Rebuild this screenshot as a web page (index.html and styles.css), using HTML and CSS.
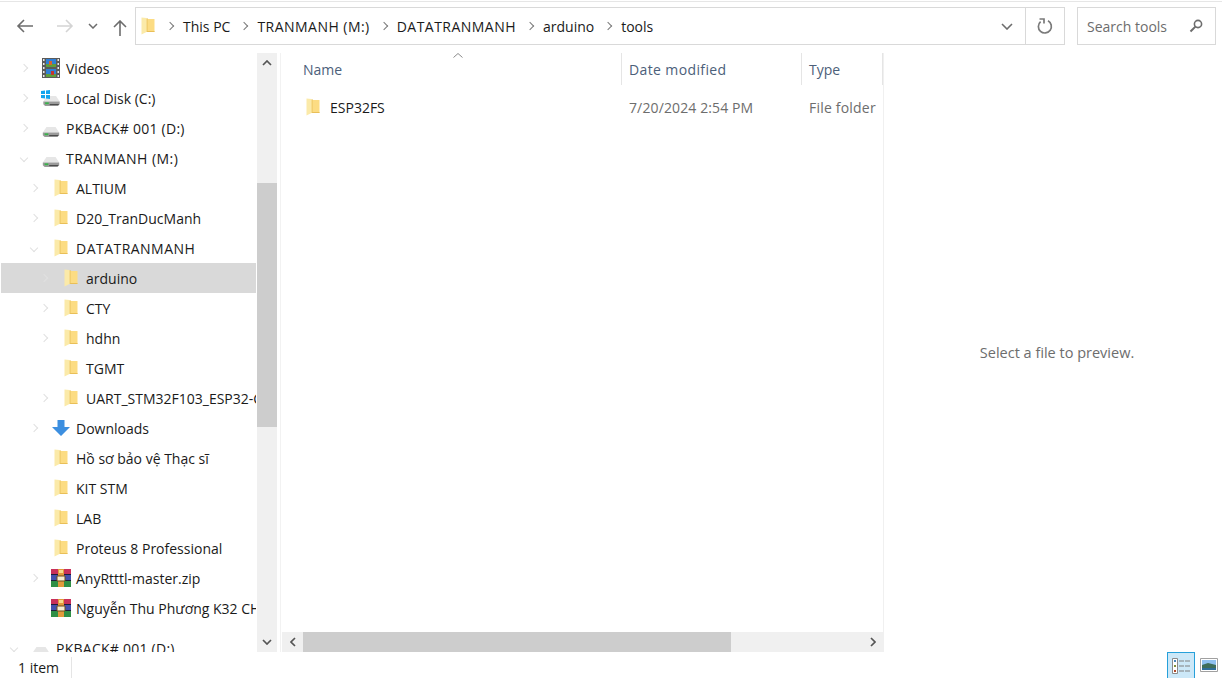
FILE: index.html
```html
<!DOCTYPE html>
<html lang="en">
<head>
    <meta charset="UTF-8">
    <title>tools</title>
    <link rel="stylesheet" href="styles.css">
</head>
<body>
    <svg class="defs" width="0" height="0">
        <symbol id="folder" viewBox="0 0 14 18">
            <path d="M5 2h8.500v13H5z" fill="#fcdc83"/>
            <path d="M6 14h7.500v1H6z" fill="#e9bf58"/>
            <path d="M5.500 1h1v14h-1z" fill="#e8c15e"/>
            <path d="M.5.500l5 .5v14l-5 2.500z" fill="#fbeaa9"/>
        </symbol>
        <symbol id="drive" viewBox="0 0 20 11">
            <path d="M5 0h10l4 6H1z" fill="#e6e6e6"/>
            <path d="M1 6h18v3l-2 2H3L1 9z" fill="#9a9a9a"/>
            <path d="M3 7h4v2H3z" fill="#38b54a"/>
            <path d="M8 9h10v1H8z" fill="#3c3c3c"/>
        </symbol>
        <symbol id="rar" viewBox="0 0 20 18">
            <path d="M0 0h20v6H0z" fill="#c9305a"/>
            <path d="M0 6h20v6H0z" fill="#4350ad"/>
            <path d="M0 12h20v6H0z" fill="#2f8f45"/>
            <path d="M0 5h20v1H0zM0 11h20v1H0z" fill="#1d1d3a"/>
            <path d="M7 0h6v18H7z" fill="#e29a3c"/>
            <path d="M6 7h8v5H6z" fill="#f6ecd0" stroke="#6d4a1d"/>
            <path d="M8 1h4v3H8z" fill="#f8d98c"/>
        </symbol>
    </svg>

    <header class="toolbar">
        <div class="nav-buttons">
            <svg class="back" width="18" height="16" viewBox="0 0 18 16"><path d="M8 2L2 8l6 6M2 8h15" fill="none" stroke="#6d6d6d" stroke-width="1.6"/></svg>
            <svg class="forward" width="18" height="16" viewBox="0 0 18 16"><path d="M10 2l6 6-6 6M16 8H1" fill="none" stroke="#d4d4d4" stroke-width="1.6"/></svg>
            <svg class="recent" width="10" height="6" viewBox="0 0 10 6"><path d="M1 1l4 4 4-4" fill="none" stroke="#6d6d6d" stroke-width="1.5"/></svg>
            <svg class="up" width="14" height="16" viewBox="0 0 14 16"><path d="M1 7l6-6 6 6M7 1v15" fill="none" stroke="#6d6d6d" stroke-width="1.6"/></svg>
        </div>
        <div class="address">
            <svg class="address-folder" width="14" height="18"><use href="#folder"/></svg>
            <span class="crumb-sep"></span><span class="crumb">This PC</span>
            <span class="crumb-sep"></span><span class="crumb caps">TRANMANH (M:)</span>
            <span class="crumb-sep"></span><span class="crumb caps">DATATRANMANH</span>
            <span class="crumb-sep"></span><span class="crumb">arduino</span>
            <span class="crumb-sep"></span><span class="crumb">tools</span>
            <span class="address-fill"></span>
            <svg class="address-drop" width="12" height="7" viewBox="0 0 12 7"><path d="M1 1l5 5 5-5" fill="none" stroke="#6d6d6d" stroke-width="1.6"/></svg>
            <div class="refresh">
                <svg width="16" height="17" viewBox="0 0 16 17"><path d="M11 2.800A6.500 6.500 0 1 1 3.600 3.600" fill="none" stroke="#7a7a7a" stroke-width="1.700"/><path d="M2.500 1h4.500v4.500" fill="none" stroke="#7a7a7a" stroke-width="1.700"/></svg>
            </div>
        </div>
        <div class="search">
            <span>Search tools</span>
            <svg width="14" height="14" viewBox="0 0 14 14"><circle cx="9" cy="5" r="3.600" fill="none" stroke="#6d6d6d" stroke-width="1.600"/><path d="M6.400 7.600L1.500 12.500" stroke="#6d6d6d" stroke-width="2"/></svg>
        </div>
    </header>

    <main class="main">
        <nav class="tree">
            <div class="row lvl-1"><i class="twist"></i><svg class="ic" height="20" viewBox="0 0 18 20"><path d="M0 0h18v20H0z" fill="#5a5a5a"/><path d="M1 1h1.500v2H1zM1 5h1.500v2H1zM1 9h1.500v2H1zM1 13h1.500v2H1zM1 17h1.500v2H1zM15.500 1H17v2h-1.500zM15.500 5H17v2h-1.500zM15.500 9H17v2h-1.500zM15.500 13H17v2h-1.500zM15.500 17H17v2h-1.500z" fill="#e8e8e8"/><path d="M4 1h10v8H4zM4 11h10v8H4z" fill="#2f7fd6"/><path d="M4 6h10v3H4zM4 16h10v3H4z" fill="#5e9e3c"/><path d="M7 3h3v4H7z" fill="#d9622b"/><path d="M9 13h3v4H9z" fill="#c4342c"/></svg><span>Videos</span></div>
            <div class="row lvl-1"><i class="twist"></i><svg class="ic" height="16" viewBox="0 0 20 16"><use href="#drive" x="1" y="6" width="19" height="10"/><path d="M0 1l4-.5V4H0zM5 .4L9 0v4H5zM0 5h4v3.500L0 8zM5 5h4v4l-4-.5z" fill="#12a5ee"/></svg><span>Local Disk (C:)</span></div>
            <div class="row lvl-1"><i class="twist"></i><svg class="ic drive-ic" height="10"><use href="#drive"/></svg><span class="caps-sm">PKBACK# 001 (D:)</span></div>
            <div class="row lvl-1"><i class="twist open"></i><svg class="ic drive-ic" height="10"><use href="#drive"/></svg><span class="caps">TRANMANH (M:)</span></div>
            <div class="row lvl-2"><i class="twist"></i><svg class="ic" height="18"><use href="#folder"/></svg><span>ALTIUM</span></div>
            <div class="row lvl-2"><i class="twist"></i><svg class="ic" height="18"><use href="#folder"/></svg><span>D20_TranDucManh</span></div>
            <div class="row lvl-2"><i class="twist open"></i><svg class="ic" height="18"><use href="#folder"/></svg><span class="caps">DATATRANMANH</span></div>
            <div class="row lvl-3 selected"><i class="twist"></i><svg class="ic" height="18"><use href="#folder"/></svg><span>arduino</span></div>
            <div class="row lvl-3"><i class="twist"></i><svg class="ic" height="18"><use href="#folder"/></svg><span>CTY</span></div>
            <div class="row lvl-3"><i class="twist"></i><svg class="ic" height="18"><use href="#folder"/></svg><span>hdhn</span></div>
            <div class="row lvl-3"><i class="twist none"></i><svg class="ic" height="18"><use href="#folder"/></svg><span>TGMT</span></div>
            <div class="row lvl-3"><i class="twist"></i><svg class="ic" height="18"><use href="#folder"/></svg><span>UART_STM32F103_ESP32-CAM</span></div>
            <div class="row lvl-2"><i class="twist"></i><svg class="ic" height="16" viewBox="0 0 18 16"><path d="M5.500 0h7v7H18l-9 9-9-9h5.500z" fill="#3d8fe0"/></svg><span>Downloads</span></div>
            <div class="row lvl-2"><i class="twist none"></i><svg class="ic" height="18"><use href="#folder"/></svg><span>Hồ sơ bảo vệ Thạc sĩ</span></div>
            <div class="row lvl-2"><i class="twist none"></i><svg class="ic" height="18"><use href="#folder"/></svg><span>KIT STM</span></div>
            <div class="row lvl-2"><i class="twist none"></i><svg class="ic" height="18"><use href="#folder"/></svg><span>LAB</span></div>
            <div class="row lvl-2"><i class="twist none"></i><svg class="ic" height="18"><use href="#folder"/></svg><span>Proteus 8 Professional</span></div>
            <div class="row lvl-2"><i class="twist"></i><svg class="ic" height="18"><use href="#rar"/></svg><span>AnyRtttl-master.zip</span></div>
            <div class="row lvl-2"><i class="twist none"></i><svg class="ic" height="18"><use href="#rar"/></svg><span>Nguyễn Thu Phương K32 CH Toán</span></div>
            <div class="row lvl-1 last"><i class="twist open"></i><svg class="ic drive-ic" height="10"><use href="#drive"/></svg><span class="caps-sm">PKBACK# 001 (D:)</span></div>
        </nav>

        <div class="vscroll">
            <div class="sb-btn"><svg width="10" height="6" viewBox="0 0 10 6"><path d="M1 5l4-4 4 4" fill="none" stroke="#555" stroke-width="1.700"/></svg></div>
            <div class="vscroll-top"></div>
            <div class="vscroll-thumb"></div>
            <div class="vscroll-rest"></div>
            <div class="sb-btn"><svg width="10" height="6" viewBox="0 0 10 6"><path d="M1 1l4 4 4-4" fill="none" stroke="#555" stroke-width="1.700"/></svg></div>
        </div>

        <section class="files">
            <div class="head">
                <div class="col col-name">Name<svg class="sort" width="10" height="5" viewBox="0 0 10 5"><path d="M.5 4.500L5 .5l4.500 4" fill="none" stroke="#8a8a8a"/></svg></div>
                <div class="col col-date">Date modified</div>
                <div class="col col-type">Type</div>
            </div>
            <div class="file-list">
                <div class="file-row">
                    <div class="cell cell-name"><svg width="14" height="18"><use href="#folder"/></svg><span>ESP32FS</span></div>
                    <div class="cell cell-date">7/20/2024 2:54 PM</div>
                    <div class="cell cell-type">File folder</div>
                </div>
            </div>
            <div class="hscroll">
                <div class="hs-btn"><svg width="6" height="10" viewBox="0 0 6 10"><path d="M5 1L1 5l4 4" fill="none" stroke="#555" stroke-width="1.700"/></svg></div>
                <div class="hscroll-thumb"></div>
                <div class="hscroll-rest"></div>
                <div class="hs-btn"><svg width="6" height="10" viewBox="0 0 6 10"><path d="M1 1l4 4-4 4" fill="none" stroke="#555" stroke-width="1.700"/></svg></div>
            </div>
        </section>

        <aside class="preview">Select a file to preview.</aside>
    </main>

    <footer class="status">
        <span class="count">1 item</span>
        <div class="views">
            <div class="view active">
                <svg width="18" height="16" viewBox="0 0 18 16"><path d="M.5.500h5v15h-5z" fill="#fff" stroke="#8a8a8a"/><path d="M2 2h2v2H2z" fill="#4a86b8"/><path d="M2 7h2v2H2z" fill="#7f8f3a"/><path d="M2 12h2v2H2z" fill="#b04a2a"/><path d="M7 3h5M13 3h5M7 8h5M13 8h5M7 13h5M13 13h5" stroke="#808080"/></svg>
            </div>
            <div class="view thumb">
                <svg width="18" height="14" viewBox="0 0 18 14"><path d="M.5.500h17v13H.5z" fill="#fff" stroke="#a0a0a0"/><path d="M2 2h14v5H2z" fill="#8fc0f0"/><path d="M2 7l6-2 8 2v3H2z" fill="#3f6d5a"/><path d="M2 10h14v2H2z" fill="#2f6d9a"/></svg>
            </div>
        </div>
    </footer>
</body>
</html>
```

FILE: styles.css
```css
html, body {
    margin: 0;
    padding: 0;
    height: 100%;
    overflow: hidden;
}
body {
    display: flex;
    flex-direction: column;
    font-family: 'Open Sans', 'Noto Sans', sans-serif;
    font-size: 14px;
    color: #1a1a1a;
    background-color: white;
}
.defs {
    position: absolute;
}
.caps {
    letter-spacing: .47px;
}
.caps-sm {
    letter-spacing: .25px;
}
.toolbar {
    display: flex;
    align-items: center;
    height: 38px;
    margin-top: 1px;
    padding: 5px 6px 0 0;
    border-top: 1px solid #e6e6e6;
    flex-shrink: 0;
}
.nav-buttons {
    display: flex;
    align-items: center;
    width: 135px;
    padding-left: 16px;
    box-sizing: border-box;
}
.forward {
    margin-left: 22px;
}
.recent {
    margin-left: 14px;
}
.up {
    margin: 3px 0 0 15px;
}
.address {
    display: flex;
    align-items: center;
    flex: 1;
    height: 38px;
    box-sizing: border-box;
    border: 1px solid #d9d9d9;
    padding-left: 5px;
}
.address-folder {
    margin-right: 12px;
}
.crumb {
    margin: 0 11px 0 9px;
    white-space: nowrap;
}
.crumb-sep {
    width: 5px;
    height: 5px;
    border-top: 1.5px solid #7a7a7a;
    border-right: 1.5px solid #7a7a7a;
    transform: rotate(45deg);
    margin-right: 1px;
}
.address-fill {
    flex: 1;
}
.address-drop {
    margin-right: 12px;
}
.refresh {
    display: flex;
    align-items: center;
    justify-content: center;
    width: 38px;
    height: 100%;
    border-left: 1px solid #d9d9d9;
}
.search {
    display: flex;
    align-items: center;
    justify-content: space-between;
    width: 139px;
    height: 38px;
    box-sizing: border-box;
    margin-left: 12px;
    padding: 0 12px 0 9px;
    border: 1px solid #d9d9d9;
    color: #6d6d6d;
}
.main {
    display: flex;
    flex: 1;
    min-height: 0;
    padding-top: 8px;
}
.tree {
    width: 257px;
    flex-shrink: 0;
    overflow: hidden;
    padding-right: 1px;
    box-sizing: border-box;
}
.row {
    display: flex;
    align-items: center;
    height: 30px;
    white-space: nowrap;
    overflow: hidden;
}
.row.selected {
    background-color: #d9d9d9;
    margin-left: 1px;
}
.row.lvl-1 { padding-left: 21px; }
.row.lvl-2 { padding-left: 31px; }
.row.lvl-3 { padding-left: 41px; }
.row.selected.lvl-3 { padding-left: 40px; }
.row.last {
    margin-top: 10px;
    padding-left: 11px;
}
.twist {
    width: 5px;
    height: 5px;
    margin-right: 14px;
    border-top: 1.5px solid #e0e0e0;
    border-right: 1.5px solid #e0e0e0;
    transform: rotate(45deg);
    flex-shrink: 0;
}
.twist.open {
    transform: rotate(135deg);
}
.twist.none {
    visibility: hidden;
}
.ic {
    flex-shrink: 0;
    width: 20px;
    margin-right: 5px;
}
.drive-ic {
    margin-top: 7px;
}
.row span {
    flex-shrink: 0;
}
.vscroll {
    display: flex;
    flex-direction: column;
    width: 20px;
    flex-shrink: 0;
    background-color: #f0f0f0;
}
.sb-btn {
    display: flex;
    align-items: center;
    justify-content: center;
    height: 20px;
    flex-shrink: 0;
}
.vscroll-top {
    height: 110px;
}
.vscroll-thumb {
    height: 244px;
    background-color: #cdcdcd;
}
.vscroll-rest {
    flex: 1;
}
.files {
    display: flex;
    flex-direction: column;
    width: 602px;
    margin-left: 3px;
    flex-shrink: 0;
    border-left: 1px solid #f2f2f2;
    border-right: 1px solid #f0f0f0;
}
.head {
    display: flex;
    height: 33px;
    flex-shrink: 0;
}
.col {
    position: relative;
    display: flex;
    align-items: center;
    box-sizing: border-box;
    height: 32px;
    padding-left: 7px;
    color: #4c607a;
    border-right: 1px solid #e5e5e5;
}
.col-name {
    width: 341px;
    padding-left: 22px;
}
.col-date {
    width: 180px;
    letter-spacing: .38px;
}
.col-type {
    width: 81px;
}
.sort {
    position: absolute;
    left: 172px;
    top: 0;
}
.file-list {
    flex: 1;
}
.file-row {
    display: flex;
    height: 42px;
    align-items: center;
}
.cell {
    padding-left: 8px;
    box-sizing: border-box;
    white-space: nowrap;
    color: #6d6d6d;
}
.cell-name {
    display: flex;
    align-items: center;
    gap: 10px;
    width: 340px;
    padding-left: 25px;
    color: #1a1a1a;
}
.cell-date {
    width: 180px;
    letter-spacing: .12px;
}
.cell-type {
    width: 80px;
    letter-spacing: .2px;
}
.hscroll {
    display: flex;
    height: 20px;
    flex-shrink: 0;
    margin-left: 1px;
    background-color: #f0f0f0;
}
.hs-btn {
    display: flex;
    align-items: center;
    justify-content: center;
    width: 21px;
    flex-shrink: 0;
}
.hscroll-thumb {
    width: 428px;
    background-color: #cdcdcd;
}
.hscroll-rest {
    flex: 1;
}
.preview {
    flex: 1;
    display: flex;
    align-items: center;
    justify-content: center;
    color: #6d6d6d;
    font-size: 14.5px;
    padding-left: 8px;
}
.status {
    display: flex;
    justify-content: space-between;
    height: 26px;
    flex-shrink: 0;
    padding-left: 18px;
}
.count {
    margin-top: 5px;
    padding-right: 12px;
    border-right: 1px solid #e5e5e5;
    line-height: 21px;
}
.views {
    display: flex;
    height: 26px;
    padding-right: 4px;
}
.view {
    display: flex;
    align-items: center;
    justify-content: center;
    width: 28px;
    height: 26px;
    box-sizing: border-box;
}
.view.active {
    background-color: #cce8f8;
    border: 1px solid #26a0da;
    border-bottom: none;
}
.view.thumb {
    width: 23px;
    justify-content: flex-end;
}
```
